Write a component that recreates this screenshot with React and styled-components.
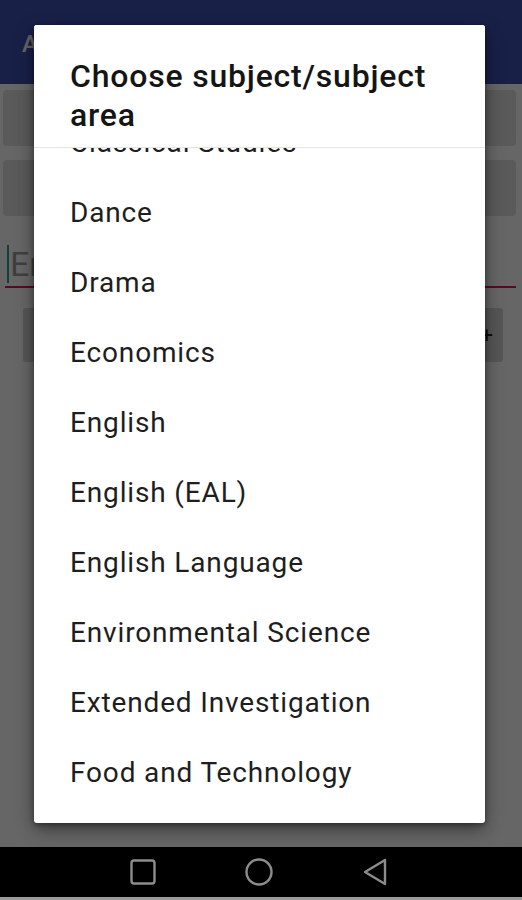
import React from "react";
import styled, { createGlobalStyle } from "styled-components";

const Global = createGlobalStyle`
  html, body { margin: 0; padding: 0; background: #000; }
  body { font-family: Roboto, "Noto Sans", Arial, sans-serif; }
  * { box-sizing: border-box; }
`;

const Screen = styled.div`
  position: relative;
  width: 522px;
  height: 900px;
  overflow: hidden;
  background: #ffffff;
  display: flex;
  flex-direction: column;
`;

const AppBar = styled.div`
  height: 84px;
  background: #3f51b5;
  color: #fff;
  display: flex;
  align-items: center;
  padding: 4px 0 0 22px;
  font-size: 24px;
  font-weight: 500;
`;

const Content = styled.div`
  flex: 1;
  display: flex;
  flex-direction: column;
  padding: 6px 6px 0 3px;
`;

const Field = styled.div`
  height: 56px;
  margin-top: ${(p) => p.$mt}px;
  background: #e2e2e2;
  border-radius: 4px;
`;

const Input = styled.div`
  margin: 22px 0 0 2px;
  height: 50px;
  border-bottom: 2px solid #d81b60;
  display: flex;
  align-items: center;
  font-size: 34px;
  color: #9e9e9e;
  padding: 4px 0 0 2px;
`;

const Cursor = styled.span`
  width: 2px;
  height: 38px;
  background: #26a69a;
  margin-right: 1px;
`;

const Button = styled.div`
  margin: 20px 13px 0 20px;
  height: 54px;
  background: #d6d6d6;
  border-radius: 3px;
  display: flex;
  align-items: center;
  justify-content: flex-end;
  padding-right: 10px;
  font-size: 22px;
  color: #222;
`;

const Spacer = styled.div`
  flex: 1;
`;

const NavBar = styled.div`
  height: 50px;
  background: #000;
  display: flex;
  align-items: center;
  justify-content: center;
  gap: 88px;
  padding-right: 4px;
  position: relative;
  z-index: 3;
`;

const BottomStrip = styled.div`
  height: 3px;
  background: #9a9a9a;
  position: relative;
  z-index: 3;
`;

const Scrim = styled.div`
  position: absolute;
  inset: 0;
  background: rgba(0, 0, 0, 0.6);
  z-index: 1;
`;

const Dialog = styled.div`
  position: absolute;
  left: 34px;
  top: 25px;
  width: 451px;
  height: 798px;
  background: #fff;
  border-radius: 3px;
  box-shadow: 0 6px 18px rgba(0, 0, 0, 0.45), 0 2px 5px rgba(0, 0, 0, 0.35);
  z-index: 2;
  display: flex;
  flex-direction: column;
  overflow: hidden;
`;

const Title = styled.div`
  padding: 32px 36px 12px 36px;
  font-size: 32px;
  line-height: 39px;
  font-weight: 500;
  letter-spacing: 0.8px;
  color: #151515;
  border-bottom: 1px solid #e4e4e4;
  position: relative;
  z-index: 1;
  background: #fff;
`;

const ListViewport = styled.div`
  flex: 1;
  overflow: hidden;
`;

const List = styled.div`
  margin-top: ${(p) => -p.$scroll}px;
  display: flex;
  flex-direction: column;
`;

const Item = styled.div`
  height: 70px;
  display: flex;
  align-items: center;
  padding-left: 36px;
  font-size: 28px;
  letter-spacing: 0.85px;
  color: #1e1e1e;
  white-space: nowrap;
`;

const items = [
  "Classical Studies",
  "Dance",
  "Drama",
  "Economics",
  "English",
  "English (EAL)",
  "English Language",
  "Environmental Science",
  "Extended Investigation",
  "Food and Technology",
];

export default function App() {
  return (
    <>
      <Global />
      <Screen>
        <AppBar>Add</AppBar>
        <Content>
          <Field $mt={0} />
          <Field $mt={14} />
          <Input>
            <Cursor />
            Enter
          </Input>
          <Button>+</Button>
          <Spacer />
        </Content>
        <NavBar>
          <svg width="26" height="26" viewBox="0 0 26 26">
            <rect x="1.5" y="1.5" width="23" height="23" rx="2.5" fill="none" stroke="#8c8c8c" strokeWidth="2.4" />
          </svg>
          <svg width="30" height="30" viewBox="0 0 30 30">
            <circle cx="15" cy="15" r="12.5" fill="none" stroke="#8c8c8c" strokeWidth="2.4" />
          </svg>
          <svg width="26" height="30" viewBox="0 0 26 30">
            <path d="M23 3 L3 15 L23 27 Z" fill="none" stroke="#8c8c8c" strokeWidth="2.4" strokeLinejoin="round" />
          </svg>
        </NavBar>
        <BottomStrip />
        <Scrim />
        <Dialog>
          <Title>Choose subject/subject area</Title>
          <ListViewport>
            <List $scroll={41}>
              {items.map((t) => (
                <Item key={t}>{t}</Item>
              ))}
            </List>
          </ListViewport>
        </Dialog>
      </Screen>
    </>
  );
}
